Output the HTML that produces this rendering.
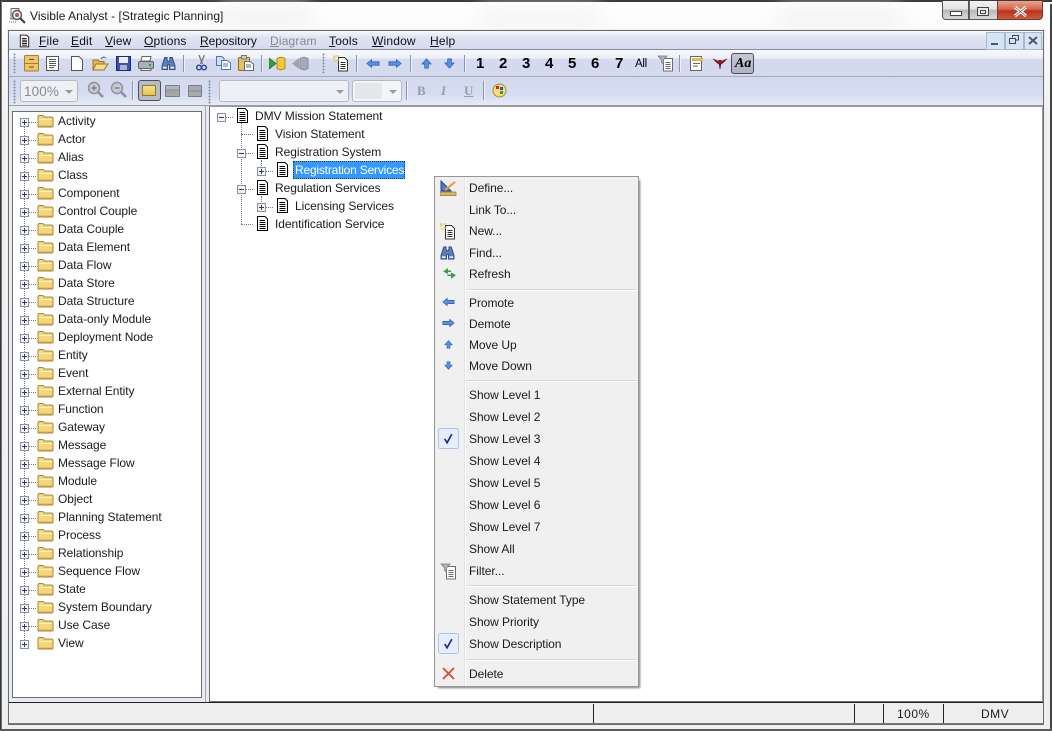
<!DOCTYPE html>
<html><head><meta charset="utf-8">
<style>
html,body{margin:0;padding:0;background:#fff}
#w{position:relative;width:1052px;height:731px;overflow:hidden;background:#fff;font-family:"Liberation Sans",sans-serif;font-size:12px;color:#000}
#w div,#w svg,#w span{position:absolute}
.t{white-space:nowrap;line-height:14px;height:14px;letter-spacing:-.06px;color:#1a1a1a}
.m{font-size:12px;letter-spacing:.18px;top:34px;line-height:14px;color:#111}
.m u{text-decoration:underline}
.sep{width:1px;background:#8f95a5;border-right:1px solid #f0f2f8}
.n{font-weight:bold;font-size:15px;top:56px;line-height:16px;color:#000}
.l{background:#d8d8d8}
.g{width:3px;background-image:radial-gradient(circle,#8a90a0 0.9px,transparent 1.1px);background-size:3px 3px}
.d{height:0;border-top:1px dotted #777}
</style></head><body>
<div id="w">
<svg width="0" height="0" style="position:absolute"><defs>
<symbol id="doc" viewBox="0 0 13 15"><path d="M1.5.5H9L11.5 3V14.5H1.5Z" fill="#fff" stroke="#000"/><path d="M3.5 4.5H9M3.5 6.5H9.5M3.5 8.5H9.5M3.5 10.5H9.5M3.5 12.5H9.5" stroke="#000" fill="none"/></symbol>
<symbol id="fold" viewBox="0 0 17 14"><path d="M1 12.5V3Q1 1.5 2.5 1.500H6L7.500 3H14.500Q16 3 16 4.500V12Q16 13 15 13H2Q1 13 1 12.500Z" fill="#f4d77b" stroke="#a8843a"/><path d="M2 5.500H15" stroke="#fff4c4"/><path d="M2 12H15" stroke="#dcae48"/></symbol>
<symbol id="plus" viewBox="0 0 9 9"><rect x=".5" y=".5" width="8" height="8" fill="#f2f3f6" stroke="#8c919c"/><path d="M2 4.500H7M4.500 2V7" stroke="#2c3a66"/></symbol>
<symbol id="minus" viewBox="0 0 9 9"><rect x=".5" y=".5" width="8" height="8" fill="#f2f3f6" stroke="#8c919c"/><path d="M2 4.500H7" stroke="#2c3a66"/></symbol>
<symbol id="al" viewBox="0 0 16 12"><path d="M1 6 6.500 1.500V4H15V8H6.500V10.500Z" fill="#5b8fe0" stroke="#2c5cb4" stroke-width=".8"/></symbol>
<symbol id="ar" viewBox="0 0 16 12"><path d="M15 6 9.500 1.500V4H1V8H9.500V10.500Z" fill="#5b8fe0" stroke="#2c5cb4" stroke-width=".8"/></symbol>
<symbol id="au" viewBox="0 0 12 12"><path d="M6 1 11 6.500H8V11H4V6.500H1Z" fill="#5b8fe0" stroke="#2c5cb4" stroke-width=".8"/></symbol>
<symbol id="ad" viewBox="0 0 12 12"><path d="M6 11 11 5.500H8V1H4V5.500H1Z" fill="#5b8fe0" stroke="#2c5cb4" stroke-width=".8"/></symbol>
<symbol id="bin" viewBox="0 0 16 15"><path d="M4 1H6.500V3L7 5H9L9.500 3V1H12L15 10V14H9V9H7V14H1V10Z" fill="#5b7db8" stroke="#24396a" stroke-width=".8"/><path d="M2 11H6V13H2ZM10 11H14V13H10Z" fill="#dfe8f6"/></symbol>
<symbol id="newd" viewBox="0 0 17 17"><path d="M5.500 2.500H11.500L14.500 5.500V16H5.500Z" fill="#fff" stroke="#333"/><path d="M7.500 7.500H12.500M7.500 9.500H12.500M7.500 11.500H12.500M7.500 13.500H12.500" stroke="#333"/><path d="M0 2H3M1 0V4M3 1H6M4 5H6M1 6H4" stroke="#e8c43c"/></symbol>
<symbol id="filt" viewBox="0 0 17 17"><path d="M6.500 3.500H15.500V16H6.500Z" fill="#fff" stroke="#6c6c6c"/><path d="M8.500 7.500H13.500M8.500 9.500H13.500M8.500 11.500H13.500M8.500 13.500H13.500" stroke="#666"/><path d="M1 1H10L6.500 5V9L4.500 7.500V5Z" fill="#b4b4b4" stroke="#777" stroke-width=".7"/></symbol>
<symbol id="chk" viewBox="0 0 22 22"><rect x=".5" y=".5" width="21" height="21" rx="2" fill="#e6eefa" stroke="#a9c3e8"/><path d="M7 11.500 9.500 15.500 14.500 6.500" fill="none" stroke="#1a2a8c" stroke-width="1.700"/></symbol>
</defs></svg>

<!-- outer frame -->
<div style="left:0;top:0;width:1052px;height:731px;background:#fff"></div>
<div style="left:0;top:0;width:1052px;height:2px;background:#3c3c3c"></div>
<div style="left:0;top:0;width:1px;height:731px;background:#333"></div>
<div style="left:1px;top:1px;width:1px;height:730px;background:#777"></div>
<div style="left:1050px;top:4px;width:2px;height:727px;background:#444"></div>
<div style="left:0;top:729px;width:1052px;height:2px;background:#5a5a5a"></div>
<div style="left:2px;top:2px;width:1048px;height:727px;background:linear-gradient(#fff,#fbfbfb 30px,#f0f0f0 120px,#eceff2)"></div>
<div style="left:220px;top:6px;width:90px;height:20px;background:#f3f3f3;filter:blur(8px)"></div>
<div style="left:480px;top:8px;width:120px;height:18px;background:#f4f4f4;filter:blur(9px)"></div>
<div style="left:780px;top:8px;width:120px;height:18px;background:#f2f2f2;filter:blur(9px)"></div>
<div style="left:7px;top:29px;width:1038px;height:698px;background:#eee"></div>

<!-- title -->
<svg style="left:8px;top:7px" width="19" height="18" viewBox="0 0 19 18"><path d="M3 1.500H11V5M3 1.500V12H6" fill="#f2f2f2" stroke="#666"/><circle cx="9" cy="8" r="4.500" fill="#eee" stroke="#555" stroke-width="1.400"/><circle cx="9" cy="8" r="2" fill="#c0504a"/><path d="M12 11 17 16" stroke="#444" stroke-width="2.200"/><path d="M1 15H8" stroke="#666" stroke-dasharray="1 1"/></svg>
<div class="t" style="left:30px;top:9px;letter-spacing:.04px;font-size:12px">Visible Analyst - [Strategic Planning]</div>

<!-- caption buttons -->
<div style="left:942px;top:1px;width:27px;height:19px;background:linear-gradient(#f4f4f4,#e4e4e4 45%,#b8b8b8 50%,#d8d8d8);border:1px solid #555;border-top:0;border-radius:0 0 0 4px;box-sizing:border-box"></div>
<div style="left:969px;top:1px;width:28px;height:19px;background:linear-gradient(#f4f4f4,#e4e4e4 45%,#b8b8b8 50%,#d8d8d8);border-bottom:1px solid #555;box-sizing:border-box;border-left:1px solid #666"></div>
<div style="left:997px;top:1px;width:46px;height:19px;background:linear-gradient(#e8a490,#d8664c 45%,#b83420 55%,#d0583c);border:1px solid #7a3a30;border-top:0;border-radius:0 0 4px 0;box-sizing:border-box"></div>
<div style="left:950px;top:11px;width:10px;height:3px;border:1px solid #444;background:#fff"></div>
<div style="left:977px;top:7px;width:10px;height:7px;border:1px solid #444;background:#e8e8e8"></div>
<div style="left:980px;top:10px;width:4px;height:2px;border:1px solid #444"></div>
<svg style="left:1013px;top:6px" width="15" height="11" viewBox="0 0 15 11"><path d="M2 1 13 10M13 1 2 10" stroke="#fff" stroke-width="3.200"/><path d="M2 1 13 10M13 1 2 10" stroke="#5a4438" stroke-width=".6"/></svg>

<!-- client -->
<div style="left:8px;top:30px;width:1036px;height:695px;background:#d4daee;border:1px solid #6c6c6c;box-sizing:border-box"></div>
<!-- menu bar -->
<div style="left:9px;top:31px;width:1034px;height:18px;background:linear-gradient(#f6f8fc,#dfe4f3 35%,#d5daef)"></div>
<div style="left:9px;top:49px;width:1034px;height:1px;background:#8d8f96"></div>
<svg style="left:19px;top:34px" width="11" height="14" viewBox="0 0 13 15"><use href="#doc"/></svg>
<div class="m" style="left:39px"><u>F</u>ile</div>
<div class="m" style="left:71px"><u>E</u>dit</div>
<div class="m" style="left:105px"><u>V</u>iew</div>
<div class="m" style="left:144px"><u>O</u>ptions</div>
<div class="m" style="left:200px;letter-spacing:-.05px"><u>R</u>epository</div>
<div class="m" style="left:270px;color:#8a8a8a"><u>D</u>iagram</div>
<div class="m" style="left:329px"><u>T</u>ools</div>
<div class="m" style="left:372px"><u>W</u>indow</div>
<div class="m" style="left:430px"><u>H</u>elp</div>
<div style="left:986px;top:32px;width:17px;height:16px;background:#d4e4f4;border:1px solid #aab8cc"></div>
<div style="left:1005px;top:32px;width:17px;height:16px;background:#d4e4f4;border:1px solid #aab8cc"></div>
<div style="left:1024px;top:32px;width:16px;height:16px;background:#d4e4f4;border:1px solid #aab8cc"></div>
<div style="left:991px;top:43px;width:7px;height:2px;background:#556"></div>
<svg style="left:1009px;top:35px" width="10" height="10" viewBox="0 0 10 10"><path d="M3.500 2.500V.5H9.500V5H7M.5 3.500H6.500V8.500H.5Z" fill="none" stroke="#445"/></svg>
<svg style="left:1028px;top:36px" width="10" height="9" viewBox="0 0 10 9"><path d="M1 1 9 8M9 1 1 8" stroke="#556" stroke-width="2"/></svg>

<!-- toolbar 1 -->
<div style="left:9px;top:50px;width:1034px;height:26px;background:linear-gradient(#f6f8fc,#eef1f9 30%,#d5daef 36%,#d3d9ee)"></div>
<div style="left:9px;top:76px;width:1034px;height:1px;background:#a9abb2"></div>
<div style="left:9px;top:77px;width:1034px;height:28px;background:linear-gradient(#d2d8ee,#d6dcf0 60%,#e6eaf6)"></div>
<div style="left:9px;top:105px;width:1034px;height:1px;background:#9a9ca2"></div>
<div class="g" style="left:13px;top:53px;height:20px"></div>
<div class="g" style="left:13px;top:80px;height:24px"></div>
<div class="g" style="left:208px;top:80px;height:24px"></div>
<div class="g" style="left:322px;top:53px;height:20px"></div>

<svg style="left:24px;top:55px" width="15" height="17" viewBox="0 0 15 17"><rect x=".5" y=".5" width="14" height="15.500" rx="1" fill="#f0c468" stroke="#a87c34"/><path d="M1 8.500H14" stroke="#a87c34"/><path d="M5 4.500H10M5 12H10" stroke="#6a4a1a"/></svg>
<svg style="left:46px;top:56px" width="13" height="15" viewBox="0 0 13 15"><rect x=".5" y=".5" width="12" height="14" fill="#fff" stroke="#555"/><path d="M3 3.500H10M3 5.500H10M3 7.500H10M3 9.500H10M3 11.500H8" stroke="#555"/></svg>
<svg style="left:71px;top:56px" width="12" height="15" viewBox="0 0 12 15"><path d="M.5.5H8L11.500 4V14.500H.5Z" fill="#fff" stroke="#555"/></svg>
<svg style="left:92px;top:56px" width="17" height="15" viewBox="0 0 17 15"><path d="M1 14V4H6L7 5.500H12V14Z" fill="#e8b848" stroke="#9a7428"/><path d="M1 14 4 8H16L12 14Z" fill="#f8dc88" stroke="#9a7428"/><path d="M9 3Q11 0 14 2" fill="none" stroke="#3c6cb8"/></svg>
<svg style="left:116px;top:56px" width="15" height="15" viewBox="0 0 15 15"><rect x=".5" y=".5" width="14" height="14" fill="#3f51b0" stroke="#1f2a70"/><rect x="3" y="1" width="9" height="6" fill="#eef"/><rect x="4" y="9" width="7" height="5" fill="#b0b4c8"/></svg>
<svg style="left:138px;top:56px" width="16" height="15" viewBox="0 0 16 15"><path d="M4 .5H13L12 5H3Z" fill="#fff" stroke="#666"/><rect x=".5" y="5.500" width="15" height="7" rx="1.500" fill="#a8b0bc" stroke="#566"/><path d="M3 12.500H13V14.500H3Z" fill="#eee" stroke="#666"/><rect x="11" y="8" width="2" height="2" fill="#2a2"/></svg>
<svg style="left:161px;top:56px" width="15" height="15" viewBox="0 0 16 15"><use href="#bin"/></svg>
<div class="sep" style="left:183px;top:55px;height:17px"></div>
<svg style="left:196px;top:55px" width="11" height="16" viewBox="0 0 11 16"><path d="M3 0 6.500 9M8.500 0 4.500 9" stroke="#777" stroke-width="1.300"/><circle cx="3" cy="12.500" r="2.300" fill="none" stroke="#2c4c9c" stroke-width="1.500"/><circle cx="8" cy="12.500" r="2.300" fill="none" stroke="#2c4c9c" stroke-width="1.500"/></svg>
<svg style="left:216px;top:56px" width="15" height="14" viewBox="0 0 15 14"><path d="M.5.5H6L8 2.500V9.500H.5Z" fill="#cfe0f6" stroke="#4c74b8"/><path d="M5.500 4.500H11L14.500 7V13.500H5.500Z" fill="#fff" stroke="#4c74b8"/><path d="M7 8H12M7 10H12" stroke="#4c74b8"/></svg>
<svg style="left:238px;top:55px" width="16" height="16" viewBox="0 0 16 16"><rect x=".5" y="2.500" width="11" height="13" rx="1" fill="#e8c060" stroke="#8c6c28"/><rect x="3.500" y=".5" width="5" height="3.500" fill="#ccc" stroke="#777"/><path d="M6.500 6.500H12L15.500 9V15.500H6.500Z" fill="#fff" stroke="#667"/><path d="M8 10H13M8 12H13" stroke="#667"/></svg>
<div class="sep" style="left:261px;top:55px;height:17px"></div>
<svg style="left:269px;top:56px" width="17" height="15" viewBox="0 0 17 15"><path d="M0 2 7 7.500 0 13Z" fill="#3c9a3c" stroke="#1e6a24" stroke-width=".7"/><path d="M8 2.500Q12 0 16 2.500V12.500Q12 15 8 12.500Z" fill="#f4c838" stroke="#b08a1c"/></svg>
<svg style="left:292px;top:56px" width="17" height="15" viewBox="0 0 17 15"><path d="M7 2 0 7.500 7 13Z" fill="#9ea4ac"/><path d="M8 2.500Q12 0 16 2.500V12.500Q12 15 8 12.500Z" fill="#a6abb2" stroke="#8a8e96"/></svg>
<svg style="left:333px;top:55px" width="17" height="17" viewBox="0 0 17 17"><use href="#newd"/></svg>
<div class="sep" style="left:356px;top:55px;height:17px"></div>
<svg style="left:366px;top:58px" width="14" height="11" viewBox="0 0 16 12"><use href="#al"/></svg>
<svg style="left:388px;top:58px" width="14" height="11" viewBox="0 0 16 12"><use href="#ar"/></svg>
<div class="sep" style="left:410px;top:55px;height:17px"></div>
<svg style="left:421px;top:58px" width="11" height="11" viewBox="0 0 12 12"><use href="#au"/></svg>
<svg style="left:444px;top:58px" width="11" height="11" viewBox="0 0 12 12"><use href="#ad"/></svg>
<div class="sep" style="left:464px;top:55px;height:17px"></div>
<div class="n" style="left:476px">1</div>
<div class="n" style="left:499px">2</div>
<div class="n" style="left:522px">3</div>
<div class="n" style="left:545px">4</div>
<div class="n" style="left:568px">5</div>
<div class="n" style="left:591px">6</div>
<div class="n" style="left:615px">7</div>
<div style="left:635px;top:57px;font-size:11.500px;line-height:14px;letter-spacing:-.3px">All</div>
<svg style="left:657px;top:55px" width="17" height="17" viewBox="0 0 17 17"><use href="#filt"/></svg>
<div class="sep" style="left:679px;top:55px;height:17px"></div>
<svg style="left:690px;top:56px" width="14" height="15" viewBox="0 0 14 15"><rect x=".5" y=".5" width="11" height="14" fill="#fff" stroke="#666"/><rect x="2" y="2" width="11" height="3" fill="#e8b848"/><path d="M3 7.500H10M3 10H8" stroke="#667"/></svg>
<svg style="left:713px;top:58px" width="14" height="12" viewBox="0 0 14 12"><path d="M0 1 5 3 7 2 9 3 14 1 10 5 8 6 7 11 6 6 4 5Z" fill="#9c1420" stroke="#4c0a10" stroke-width=".5"/></svg>
<div style="left:731px;top:53px;width:23px;height:21px;box-sizing:border-box;border:1px solid #4c5058;border-radius:3px;background:linear-gradient(#c4c8d4,#aeb2c0)"></div>
<div style="left:735px;top:55px;font-family:'Liberation Serif',serif;font-style:italic;font-weight:bold;font-size:14px;line-height:17px">Aa</div>

<!-- toolbar 2 -->
<div style="left:20px;top:80px;width:58px;height:22px;box-sizing:border-box;border:1px solid #b8bac2;border-radius:3px;background:#eef0f6"></div>
<div style="left:24px;top:84px;font-size:13.500px;line-height:15px;color:#8b8b8b;letter-spacing:.1px">100%</div>
<div style="left:65px;top:90px;border:4px solid transparent;border-top:4px solid #9a9aa0;border-bottom:0"></div>
<svg style="left:87px;top:81px" width="18" height="18" viewBox="0 0 18 18"><circle cx="7" cy="7" r="5.500" fill="#c8cbd2" stroke="#8f9299" stroke-width="1.500"/><path d="M4.500 7H9.500M7 4.500V9.500" stroke="#70747c" stroke-width="1.300"/><path d="M11 11 16 16" stroke="#8f9299" stroke-width="2.500"/></svg>
<svg style="left:110px;top:81px" width="18" height="18" viewBox="0 0 18 18"><circle cx="7" cy="7" r="5.500" fill="#c8cbd2" stroke="#8f9299" stroke-width="1.500"/><path d="M4.500 7H9.500" stroke="#70747c" stroke-width="1.300"/><path d="M11 11 16 16" stroke="#8f9299" stroke-width="2.500"/></svg>
<div class="sep" style="left:132px;top:81px;height:19px"></div>
<div style="left:138px;top:80px;width:23px;height:21px;box-sizing:border-box;border:1px solid #4c5058;border-radius:3px;background:#b8bcc8"></div>
<div style="left:142px;top:85px;width:14px;height:11px;background:linear-gradient(#f8e088,#e8c44c);border:1px solid #8c7830;box-sizing:border-box;border-radius:1px"></div>
<div style="left:165px;top:85px;width:15px;height:12px;background:linear-gradient(#b4b6bc 30%,#9a9ca2 30%,#a8aab0);border:1px solid #7c7e86;box-sizing:border-box;border-radius:1px"></div>
<div style="left:188px;top:85px;width:14px;height:12px;background:linear-gradient(#a8aab0 45%,#80828a 45%,#80828a 55%,#a8aab0 55%);border:1px solid #7c7e86;box-sizing:border-box;border-radius:1px"></div>
<div style="left:219px;top:80px;width:130px;height:22px;box-sizing:border-box;border:1px solid #b8bac2;border-radius:3px;background:#eef0f6"></div>
<div style="left:336px;top:90px;border:4px solid transparent;border-top:4px solid #9a9aa0;border-bottom:0"></div>
<div style="left:352px;top:80px;width:50px;height:22px;box-sizing:border-box;border:1px solid #b8bac2;border-radius:3px;background:#f4f5f9"></div>
<div style="left:355px;top:83px;width:27px;height:16px;background:#e6e7ea"></div>
<div style="left:389px;top:90px;border:4px solid transparent;border-top:4px solid #9a9aa0;border-bottom:0"></div>
<div class="sep" style="left:406px;top:81px;height:19px"></div>
<div style="left:417px;top:83px;font-family:'Liberation Serif',serif;font-weight:bold;font-size:13px;line-height:15px;color:#9b9ea8">B</div>
<div style="left:441px;top:83px;font-family:'Liberation Serif',serif;font-weight:bold;font-style:italic;font-size:13px;line-height:15px;color:#9b9ea8">I</div>
<div style="left:464px;top:83px;font-family:'Liberation Serif',serif;font-weight:bold;font-size:13px;line-height:15px;color:#9b9ea8;text-decoration:underline">U</div>
<div class="sep" style="left:483px;top:81px;height:19px"></div>
<svg style="left:492px;top:83px" width="15" height="15" viewBox="0 0 15 15"><circle cx="7.500" cy="7.500" r="6.500" fill="#f4dc78" stroke="#a89038"/><rect x="4" y="3" width="3" height="3" fill="#d02828"/><rect x="8" y="4" width="3" height="3" fill="#2858c8"/><rect x="8" y="8" width="3" height="3" fill="#28a048"/></svg>

<!-- left panel -->
<div style="left:9px;top:106px;width:1034px;height:597px;background:#e8eaf2"></div>
<div style="left:12px;top:111px;width:190px;height:587px;box-sizing:border-box;border:1px solid #6e6e6e;background:#fff"></div>
<div style="left:209px;top:106px;width:834px;height:596px;box-sizing:border-box;border-left:1px solid #6e6e6e;border-right:1px solid #999;border-bottom:1px solid #6e6e6e;border-top:1px solid #999;background:#fff"></div>
<div style="left:205px;top:106px;width:1px;height:597px;background:#a8a8ac"></div>

<div style="left:24px;top:126px;width:0;height:516px;border-left:1px dotted #777"></div>
<!-- horizontal connectors from expanders to folders -->
<div style="left:29px;top:122px;width:7px;height:522px;background:repeating-linear-gradient(to right,transparent 0 1px,#fff 1px 2px),repeating-linear-gradient(to bottom,#777 0 1px,transparent 1px 18px)"></div>

<svg style="left:20px;top:118px" width="9" height="9"><use href="#plus"/></svg><svg style="left:20px;top:136px" width="9" height="9"><use href="#plus"/></svg><svg style="left:20px;top:154px" width="9" height="9"><use href="#plus"/></svg><svg style="left:20px;top:172px" width="9" height="9"><use href="#plus"/></svg><svg style="left:20px;top:190px" width="9" height="9"><use href="#plus"/></svg><svg style="left:20px;top:208px" width="9" height="9"><use href="#plus"/></svg><svg style="left:20px;top:226px" width="9" height="9"><use href="#plus"/></svg><svg style="left:20px;top:244px" width="9" height="9"><use href="#plus"/></svg><svg style="left:20px;top:262px" width="9" height="9"><use href="#plus"/></svg><svg style="left:20px;top:280px" width="9" height="9"><use href="#plus"/></svg><svg style="left:20px;top:298px" width="9" height="9"><use href="#plus"/></svg><svg style="left:20px;top:316px" width="9" height="9"><use href="#plus"/></svg><svg style="left:20px;top:334px" width="9" height="9"><use href="#plus"/></svg><svg style="left:20px;top:352px" width="9" height="9"><use href="#plus"/></svg><svg style="left:20px;top:370px" width="9" height="9"><use href="#plus"/></svg><svg style="left:20px;top:388px" width="9" height="9"><use href="#plus"/></svg><svg style="left:20px;top:406px" width="9" height="9"><use href="#plus"/></svg><svg style="left:20px;top:424px" width="9" height="9"><use href="#plus"/></svg><svg style="left:20px;top:442px" width="9" height="9"><use href="#plus"/></svg><svg style="left:20px;top:460px" width="9" height="9"><use href="#plus"/></svg><svg style="left:20px;top:478px" width="9" height="9"><use href="#plus"/></svg><svg style="left:20px;top:496px" width="9" height="9"><use href="#plus"/></svg><svg style="left:20px;top:514px" width="9" height="9"><use href="#plus"/></svg><svg style="left:20px;top:532px" width="9" height="9"><use href="#plus"/></svg><svg style="left:20px;top:550px" width="9" height="9"><use href="#plus"/></svg><svg style="left:20px;top:568px" width="9" height="9"><use href="#plus"/></svg><svg style="left:20px;top:586px" width="9" height="9"><use href="#plus"/></svg><svg style="left:20px;top:604px" width="9" height="9"><use href="#plus"/></svg><svg style="left:20px;top:622px" width="9" height="9"><use href="#plus"/></svg><svg style="left:20px;top:640px" width="9" height="9"><use href="#plus"/></svg>

<svg style="left:37px;top:114px" width="17" height="14"><use href="#fold"/></svg><svg style="left:37px;top:132px" width="17" height="14"><use href="#fold"/></svg><svg style="left:37px;top:150px" width="17" height="14"><use href="#fold"/></svg><svg style="left:37px;top:168px" width="17" height="14"><use href="#fold"/></svg><svg style="left:37px;top:186px" width="17" height="14"><use href="#fold"/></svg><svg style="left:37px;top:204px" width="17" height="14"><use href="#fold"/></svg><svg style="left:37px;top:222px" width="17" height="14"><use href="#fold"/></svg><svg style="left:37px;top:240px" width="17" height="14"><use href="#fold"/></svg><svg style="left:37px;top:258px" width="17" height="14"><use href="#fold"/></svg><svg style="left:37px;top:276px" width="17" height="14"><use href="#fold"/></svg><svg style="left:37px;top:294px" width="17" height="14"><use href="#fold"/></svg><svg style="left:37px;top:312px" width="17" height="14"><use href="#fold"/></svg><svg style="left:37px;top:330px" width="17" height="14"><use href="#fold"/></svg><svg style="left:37px;top:348px" width="17" height="14"><use href="#fold"/></svg><svg style="left:37px;top:366px" width="17" height="14"><use href="#fold"/></svg><svg style="left:37px;top:384px" width="17" height="14"><use href="#fold"/></svg><svg style="left:37px;top:402px" width="17" height="14"><use href="#fold"/></svg><svg style="left:37px;top:420px" width="17" height="14"><use href="#fold"/></svg><svg style="left:37px;top:438px" width="17" height="14"><use href="#fold"/></svg><svg style="left:37px;top:456px" width="17" height="14"><use href="#fold"/></svg><svg style="left:37px;top:474px" width="17" height="14"><use href="#fold"/></svg><svg style="left:37px;top:492px" width="17" height="14"><use href="#fold"/></svg><svg style="left:37px;top:510px" width="17" height="14"><use href="#fold"/></svg><svg style="left:37px;top:528px" width="17" height="14"><use href="#fold"/></svg><svg style="left:37px;top:546px" width="17" height="14"><use href="#fold"/></svg><svg style="left:37px;top:564px" width="17" height="14"><use href="#fold"/></svg><svg style="left:37px;top:582px" width="17" height="14"><use href="#fold"/></svg><svg style="left:37px;top:600px" width="17" height="14"><use href="#fold"/></svg><svg style="left:37px;top:618px" width="17" height="14"><use href="#fold"/></svg><svg style="left:37px;top:636px" width="17" height="14"><use href="#fold"/></svg>

<div class="t" style="left:58px;top:114px">Activity</div>
<div class="t" style="left:58px;top:132px">Actor</div>
<div class="t" style="left:58px;top:150px">Alias</div>
<div class="t" style="left:58px;top:168px">Class</div>
<div class="t" style="left:58px;top:186px">Component</div>
<div class="t" style="left:58px;top:204px">Control Couple</div>
<div class="t" style="left:58px;top:222px">Data Couple</div>
<div class="t" style="left:58px;top:240px">Data Element</div>
<div class="t" style="left:58px;top:258px">Data Flow</div>
<div class="t" style="left:58px;top:276px">Data Store</div>
<div class="t" style="left:58px;top:294px">Data Structure</div>
<div class="t" style="left:58px;top:312px">Data-only Module</div>
<div class="t" style="left:58px;top:330px">Deployment Node</div>
<div class="t" style="left:58px;top:348px">Entity</div>
<div class="t" style="left:58px;top:366px">Event</div>
<div class="t" style="left:58px;top:384px">External Entity</div>
<div class="t" style="left:58px;top:402px">Function</div>
<div class="t" style="left:58px;top:420px">Gateway</div>
<div class="t" style="left:58px;top:438px">Message</div>
<div class="t" style="left:58px;top:456px">Message Flow</div>
<div class="t" style="left:58px;top:474px">Module</div>
<div class="t" style="left:58px;top:492px">Object</div>
<div class="t" style="left:58px;top:510px">Planning Statement</div>
<div class="t" style="left:58px;top:528px">Process</div>
<div class="t" style="left:58px;top:546px">Relationship</div>
<div class="t" style="left:58px;top:564px">Sequence Flow</div>
<div class="t" style="left:58px;top:582px">State</div>
<div class="t" style="left:58px;top:600px">System Boundary</div>
<div class="t" style="left:58px;top:618px">Use Case</div>
<div class="t" style="left:58px;top:636px">View</div>

<!-- right tree -->
<div style="left:241px;top:123px;width:0;height:101px;border-left:1px dotted #777"></div>
<div class="d" style="left:241px;top:134px;width:12px"></div>
<div class="d" style="left:241px;top:224px;width:12px"></div>
<div class="d" style="left:226px;top:117px;width:7px"></div>
<div class="d" style="left:246px;top:153px;width:7px"></div>
<div class="d" style="left:246px;top:189px;width:7px"></div>
<div class="d" style="left:266px;top:171px;width:7px"></div>
<div class="d" style="left:266px;top:207px;width:7px"></div>
<div style="left:261px;top:160px;width:0;height:8px;border-left:1px dotted #777"></div>
<div style="left:261px;top:196px;width:0;height:8px;border-left:1px dotted #777"></div>
<svg style="left:217px;top:113px" width="9" height="9"><use href="#minus"/></svg>
<svg style="left:237px;top:149px" width="9" height="9"><use href="#minus"/></svg>
<svg style="left:237px;top:185px" width="9" height="9"><use href="#minus"/></svg>
<svg style="left:257px;top:167px" width="9" height="9"><use href="#plus"/></svg>
<svg style="left:257px;top:203px" width="9" height="9"><use href="#plus"/></svg>
<svg style="left:236px;top:108px" width="13" height="15"><use href="#doc"/></svg>
<svg style="left:256px;top:126px" width="13" height="15"><use href="#doc"/></svg>
<svg style="left:256px;top:144px" width="13" height="15"><use href="#doc"/></svg>
<svg style="left:276px;top:162px" width="13" height="15"><use href="#doc"/></svg>
<svg style="left:256px;top:180px" width="13" height="15"><use href="#doc"/></svg>
<svg style="left:276px;top:198px" width="13" height="15"><use href="#doc"/></svg>
<svg style="left:256px;top:216px" width="13" height="15"><use href="#doc"/></svg>
<div style="left:293px;top:161px;width:112px;height:18px;box-sizing:border-box;background:#3399ff;border:1px dotted #1a3a60"></div>
<div class="t" style="left:255px;top:109px">DMV Mission Statement</div>
<div class="t" style="left:275px;top:127px">Vision Statement</div>
<div class="t" style="left:275px;top:145px">Registration System</div>
<div class="t" style="left:295px;top:163px;color:#fff;letter-spacing:-.2px">Registration Services</div>
<div class="t" style="left:275px;top:181px">Regulation Services</div>
<div class="t" style="left:295px;top:199px">Licensing Services</div>
<div class="t" style="left:275px;top:217px">Identification Service</div>

<!-- status bar -->
<div style="left:9px;top:702px;width:1034px;height:1px;background:#222"></div>
<div style="left:9px;top:703px;width:1034px;height:21px;background:#eeeeee"></div>
<div style="left:9px;top:723px;width:1034px;height:1px;background:#777"></div>
<div style="left:593px;top:704px;width:1px;height:19px;background:#222"></div>
<div style="left:854px;top:704px;width:1px;height:19px;background:#222"></div>
<div style="left:883px;top:704px;width:1px;height:19px;background:#222"></div>
<div style="left:943px;top:704px;width:1px;height:19px;background:#222"></div>
<div class="t" style="left:897px;top:707px;letter-spacing:.5px">100%</div>
<div class="t" style="left:981px;top:707px;letter-spacing:.5px">DMV</div>

<!-- context menu -->
<div style="left:438px;top:180px;width:202px;height:508px;background:#777;filter:blur(1px)"></div>
<div style="left:434px;top:176px;width:205px;height:511px;box-sizing:border-box;border:1px solid #979797;background:#f0f0f0"></div>
<div style="left:464px;top:177px;width:1px;height:509px;background:#e2e3e3"></div>
<div style="left:465px;top:177px;width:1px;height:509px;background:#fff"></div>
<div class="l" style="left:466px;top:289px;width:171px;height:1px"></div><div style="left:466px;top:290px;width:171px;height:1px;background:#fff"></div>
<div class="l" style="left:466px;top:380px;width:171px;height:1px"></div><div style="left:466px;top:381px;width:171px;height:1px;background:#fff"></div>
<div class="l" style="left:466px;top:585px;width:171px;height:1px"></div><div style="left:466px;top:586px;width:171px;height:1px;background:#fff"></div>
<div class="l" style="left:466px;top:659px;width:171px;height:1px"></div><div style="left:466px;top:660px;width:171px;height:1px;background:#fff"></div>

<svg style="left:440px;top:180px" width="17" height="17" viewBox="0 0 17 17"><path d="M1 1V11H11Z" fill="#4c7cc8" stroke="#24488c"/><path d="M5 10 15 2" stroke="#e8a040" stroke-width="2.200"/><rect x="0" y="12" width="16" height="3.500" fill="#d8b858" stroke="#8c7430" stroke-width=".7"/></svg>
<svg style="left:440px;top:223px" width="17" height="17"><use href="#newd"/></svg>
<svg style="left:440px;top:246px" width="15" height="14" viewBox="0 0 16 15"><use href="#bin"/></svg>
<svg style="left:442px;top:267px" width="14" height="13" viewBox="0 0 14 13"><path d="M6 1 1 4.500 6 7V5H9V3.500H6Z" fill="#3c9c48"/><path d="M9 12 14 8 9 5.500V7.500H5.500V9H9Z" fill="#3c9c48"/></svg>
<svg style="left:442px;top:297px" width="13" height="10" viewBox="0 0 16 12"><use href="#al"/></svg>
<svg style="left:442px;top:318px" width="13" height="10" viewBox="0 0 16 12"><use href="#ar"/></svg>
<svg style="left:444px;top:340px" width="9" height="9" viewBox="0 0 12 12"><use href="#au"/></svg>
<svg style="left:444px;top:361px" width="9" height="9" viewBox="0 0 12 12"><use href="#ad"/></svg>
<svg style="left:438px;top:428px" width="21" height="21" viewBox="0 0 22 22"><use href="#chk"/></svg>
<svg style="left:440px;top:563px" width="17" height="17"><use href="#filt"/></svg>
<svg style="left:438px;top:633px" width="21" height="21" viewBox="0 0 22 22"><use href="#chk"/></svg>
<svg style="left:442px;top:667px" width="13" height="13" viewBox="0 0 13 13"><path d="M1 1 12 12M12 1 1 12" stroke="#e04a38" stroke-width="1.900"/></svg>

<div class="t" style="left:469px;top:181px">Define...</div>
<div class="t" style="left:469px;top:203px">Link To...</div>
<div class="t" style="left:469px;top:224px">New...</div>
<div class="t" style="left:469px;top:246px">Find...</div>
<div class="t" style="left:469px;top:267px">Refresh</div>
<div class="t" style="left:469px;top:296px">Promote</div>
<div class="t" style="left:469px;top:317px">Demote</div>
<div class="t" style="left:469px;top:338px">Move Up</div>
<div class="t" style="left:469px;top:359px">Move Down</div>
<div class="t" style="left:469px;top:388px">Show Level 1</div>
<div class="t" style="left:469px;top:410px">Show Level 2</div>
<div class="t" style="left:469px;top:432px">Show Level 3</div>
<div class="t" style="left:469px;top:454px">Show Level 4</div>
<div class="t" style="left:469px;top:476px">Show Level 5</div>
<div class="t" style="left:469px;top:498px">Show Level 6</div>
<div class="t" style="left:469px;top:520px">Show Level 7</div>
<div class="t" style="left:469px;top:542px">Show All</div>
<div class="t" style="left:469px;top:564px">Filter...</div>
<div class="t" style="left:469px;top:593px">Show Statement Type</div>
<div class="t" style="left:469px;top:615px">Show Priority</div>
<div class="t" style="left:469px;top:637px">Show Description</div>
<div class="t" style="left:469px;top:667px">Delete</div>
</div>
</body></html>
